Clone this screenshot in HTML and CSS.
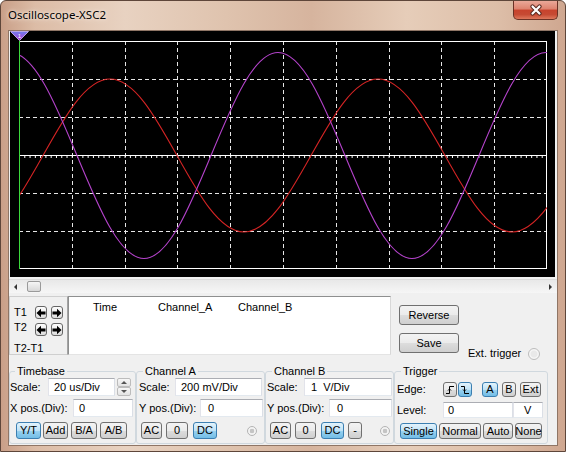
FILE: index.html
```html
<!DOCTYPE html>
<html>
<head>
<meta charset="utf-8">
<title>Oscilloscope-XSC2</title>
<link rel="stylesheet" href="styles.css">
</head>
<body>
<div class="window">
  <div class="titlebar">
    <span class="title">Oscilloscope-XSC2</span>
    <div class="close">
      <svg width="14" height="12" viewBox="0 0 14 12"><path d="M3.5 2.5 L10.5 9.5 M10.5 2.5 L3.5 9.5" stroke="#5a2a20" stroke-width="4.2" stroke-linecap="round"/><path d="M3.5 2.5 L10.5 9.5 M10.5 2.5 L3.5 9.5" stroke="#fff" stroke-width="2.2" stroke-linecap="round"/></svg>
    </div>
  </div>
  <div class="client">
    <div class="scope">
      <svg class="plot" width="545" height="246" viewBox="0 0 545 246">
        <defs>
          <clipPath id="pc"><rect x="9" y="10" width="528" height="228"/></clipPath>
          <linearGradient id="mk" x1="0" y1="0" x2="0" y2="1"><stop offset="0" stop-color="#6f7cf0"/><stop offset="1" stop-color="#b040d0"/></linearGradient>
        </defs>
        <g stroke="#e6e6e6" stroke-width="1" stroke-dasharray="4 3" fill="none">
          <path d="M62.5 10V238M115.5 10V238M167.5 10V238M220.5 10V238M273.5 10V238M326.5 10V238M379.5 10V238M431.5 10V238M484.5 10V238"/>
          <path d="M9 48.5H537M9 86.5H537M9 162.5H537M9 200.5H537"/>
        </g>
        <rect x="9.5" y="10.5" width="527" height="227" fill="none" stroke="#fff"/>
        <path d="M9 124.5H537" stroke="#fff"/>
        <path d="M9 126H537" stroke="#fff" stroke-width="2" stroke-dasharray="1 4.28"/>
        <g clip-path="url(#pc)" fill="none" stroke-width="1.1">
          <path stroke="#d42424" d="M -34 201 C -9.75 201 11.15 163.69 33 124.5 C 54.85 85.31 75.75 48 100 48 C 124.25 48 145.15 85.31 167 124.5 C 188.85 163.69 209.75 201 234 201 C 258.25 201 279.15 163.69 301 124.5 C 322.85 85.31 343.75 48 368 48 C 392.25 48 413.15 85.31 435 124.5 C 456.85 163.69 477.75 201 502 201 C 526.25 201 547.15 163.69 569 124.5"/>
          <path stroke="#b543cc" d="M -67 124.5 C -45.15 71.73 -24.25 21.5 0 21.5 C 24.25 21.5 45.15 71.73 67 124.5 C 88.85 177.27 109.75 227.5 134 227.5 C 158.25 227.5 179.15 177.27 201 124.5 C 222.85 71.73 243.75 21.5 268 21.5 C 292.25 21.5 313.15 71.73 335 124.5 C 356.85 177.27 377.75 227.5 402 227.5 C 426.25 227.5 447.15 177.27 469 124.5 C 490.85 71.73 511.75 21.5 536 21.5 C 560.25 21.5 581.15 71.73 603 124.5"/>
        </g>
        <path d="M9.5 10V238" stroke="#3cd83c"/>
        <polygon points="0.5,0.5 18.5,0.5 9.5,9.5" fill="url(#mk)" stroke="#d8c0ff" stroke-width="0.8"/>
        <text x="9.5" y="6.5" font-size="6" fill="#fff" text-anchor="middle" font-family="Liberation Sans, sans-serif">1</text>
      </svg>
    </div>
    <div class="hscroll">
      <span class="sarrow left"></span>
      <span class="thumb"></span>
      <span class="sarrow right"></span>
    </div>
    <div class="readout">
      <div class="cursors">
        <div class="crow">
          <span class="clabel">T1</span>
          <span class="abtn"><svg width="10" height="10" viewBox="0 0 10 10"><path d="M0.5 5 L5 0.8 L5 3.4 L9.5 3.4 L9.5 6.6 L5 6.6 L5 9.2 Z"/></svg></span>
          <span class="abtn"><svg width="10" height="10" viewBox="0 0 10 10"><path d="M9.5 5 L5 0.8 L5 3.4 L0.5 3.4 L0.5 6.6 L5 6.6 L5 9.2 Z"/></svg></span>
        </div>
        <div class="crow r2">
          <span class="clabel">T2</span>
          <span class="abtn"><svg width="10" height="10" viewBox="0 0 10 10"><path d="M0.5 5 L5 0.8 L5 3.4 L9.5 3.4 L9.5 6.6 L5 6.6 L5 9.2 Z"/></svg></span>
          <span class="abtn"><svg width="10" height="10" viewBox="0 0 10 10"><path d="M9.5 5 L5 0.8 L5 3.4 L0.5 3.4 L0.5 6.6 L5 6.6 L5 9.2 Z"/></svg></span>
        </div>
        <div class="cdiff">T2-T1</div>
      </div>
      <div class="table">
        <div class="thead"><span class="c-time">Time</span><span class="c-a">Channel_A</span><span class="c-b">Channel_B</span></div>
      </div>
      <div class="side">
        <span class="btn wide">Reverse</span>
        <div class="saverow">
          <span class="btn wide">Save</span>
          <span class="ext">Ext. trigger</span>
          <span class="radio"></span>
        </div>
      </div>
    </div>
    <div class="controls">
      <fieldset class="grp tb">
        <legend>Timebase</legend>
        <div class="row r1">
          <span class="lbl l1">Scale:</span>
          <span class="inp i1">20 us/Div</span>
          <span class="spin"><span class="sb up"></span><span class="sb dn"></span></span>
        </div>
        <div class="row r2">
          <span class="lbl l2">X pos.(Div):</span>
          <span class="inp i2">0</span>
        </div>
        <div class="row r3">
          <span class="btn on b1">Y/T</span>
          <span class="btn b2">Add</span>
          <span class="btn b3">B/A</span>
          <span class="btn b4">A/B</span>
        </div>
      </fieldset>
      <fieldset class="grp cha">
        <legend>Channel A</legend>
        <div class="row r1">
          <span class="lbl l1">Scale:</span>
          <span class="inp i1">200 mV/Div</span>
        </div>
        <div class="row r2">
          <span class="lbl l2">Y pos.(Div):</span>
          <span class="inp i2">0</span>
        </div>
        <div class="row r3">
          <span class="btn b1">AC</span>
          <span class="btn b2">0</span>
          <span class="btn on b3">DC</span>
          <span class="dot"></span>
        </div>
      </fieldset>
      <fieldset class="grp chb">
        <legend>Channel B</legend>
        <div class="row r1">
          <span class="lbl l1">Scale:</span>
          <span class="inp i1">1&nbsp; V/Div</span>
        </div>
        <div class="row r2">
          <span class="lbl l2">Y pos.(Div):</span>
          <span class="inp i2">0</span>
        </div>
        <div class="row r3">
          <span class="btn b1">AC</span>
          <span class="btn b2">0</span>
          <span class="btn on b3">DC</span>
          <span class="btn b4">-</span>
          <span class="dot"></span>
        </div>
      </fieldset>
      <fieldset class="grp trg">
        <legend>Trigger</legend>
        <div class="row r1">
          <span class="lbl l1">Edge:</span>
          <span class="btn e1"><svg width="10" height="10" viewBox="0 0 10 10"><path d="M1 8.5H4.5V1.5H9M3 5.5L4.5 4L6 5.5" fill="none" stroke="#000" stroke-width="1"/></svg></span>
          <span class="btn on e2"><svg width="10" height="10" viewBox="0 0 10 10"><path d="M1 1.5H4.5V8.5H9M3 4.5L4.5 6L6 4.5" fill="none" stroke="#000" stroke-width="1"/></svg></span>
          <span class="btn on e3">A</span>
          <span class="btn e4">B</span>
          <span class="btn e5">Ext</span>
        </div>
        <div class="row r2">
          <span class="lbl l2">Level:</span>
          <span class="inp i2">0</span>
          <span class="inp unit">V</span>
        </div>
        <div class="row r3">
          <span class="btn on b1">Single</span>
          <span class="btn b2">Normal</span>
          <span class="btn b3">Auto</span>
          <span class="btn b4">None</span>
        </div>
      </fieldset>
    </div>
  </div>
</div>
</body>
</html>
```

FILE: styles.css
```css
* { box-sizing: border-box; }
html, body { margin: 0; padding: 0; }
body {
  width: 566px; height: 452px; overflow: hidden; background: #fff;
  font-family: "Liberation Sans", Arial, sans-serif; font-size: 11px; line-height: 13px; color: #000;
}
.window {
  width: 566px; height: 452px; display: flex; flex-direction: column;
  border: 1px solid #5e463a; border-radius: 6px 6px 0 0;
  background: linear-gradient(90deg, #c99f88 0%, #dcbca6 6%, #e8d2c1 22%, #dfc3ae 40%, #d6b49e 55%, #e6cdb9 72%, #ddbea8 88%, #cfa790 100%);
}
.titlebar { height: 29px; flex: none; display: flex; align-items: flex-start; }
.title {
  margin: 6px 0 0 7px; font-family: "Noto Sans", "Open Sans", sans-serif; font-size: 11.5px; line-height: 16px;
  text-shadow: 0 0 6px #f5e9e0, 0 0 3px #f5e9e0;
}
.close {
  margin: 0 7px 0 auto; width: 45px; height: 19px; display: flex; align-items: center; justify-content: center;
  border: 1px solid #6a3226; border-top: none; border-radius: 0 0 5px 5px;
  background: linear-gradient(#eaa898 0%, #dd826e 45%, #c8432d 50%, #c64a33 75%, #de785c 100%);
}
.client {
  flex: 1; margin: 0 7px 5px 7px; border: 1px solid #8f7565; background: #f0f0f0;
  display: flex; flex-direction: column;
}
.scope { margin-left: 1px; width: 545px; height: 246px; background: #000; flex: none; }
.plot { display: block; }
.hscroll {
  margin-top: 2px; height: 14px; flex: none; display: flex; align-items: center;
  background: linear-gradient(#e8e8e8, #f6f6f6); border-top: 1px solid #dcdcdc;
}
.sarrow { width: 0; height: 0; border-top: 3px solid transparent; border-bottom: 3px solid transparent; }
.sarrow.left { margin-left: 5px; border-right: 3px solid #333; }
.sarrow.right { margin-left: auto; margin-right: 5px; border-left: 3px solid #333; }
.thumb {
  margin-left: 10px; width: 14px; height: 11px; border: 1px solid #9a9a9a; border-radius: 2px;
  background: linear-gradient(#f6f6f6, #d8d8d8);
}
.readout { margin-top: 3px; height: 59px; flex: none; display: flex; }
.cursors {
  width: 59px; height: 59px; border: 1px solid #cfcfcf; border-right: 1px solid #a4a4a4;
  padding: 9px 0 0 4px;
}
.crow { display: flex; align-items: center; height: 13px; }
.crow.r2 { margin-top: 4px; }
.crow.r2 .clabel { margin-top: -5px; }
.clabel { width: 21px; flex: none; }
.abtn {
  width: 12px; height: 13px; margin-right: 4px; flex: none; display: flex; align-items: center; justify-content: center;
  border: 1px solid #666; border-radius: 3px; background: linear-gradient(#fdfdfd, #dcdcdc);
}
.abtn svg { display: block; }
.cdiff { margin-top: 6px; }
.table {
  width: 323px; height: 59px; background: #fff; border: 1px solid #8e8f8f; border-right-color: #d8d8d8; border-bottom-color: #e4e4e4;
  padding-top: 4px;
}
.thead { display: flex; padding-left: 24px; }
.c-time { width: 65px; }
.c-a { width: 80px; }
.side { margin-left: 8px; padding-top: 9px; display: flex; flex-direction: column; }
.saverow { display: flex; align-items: flex-start; margin-top: 8px; }
.ext { margin: 14px 0 0 9px; white-space: nowrap; }
.radio {
  margin: 15px 0 0 7px; width: 12px; height: 12px; border-radius: 50%; border: 1px solid #bdbdbd;
  background: radial-gradient(circle, #e9e9e9 0 3px, #f6f6f6 4px);
}
.btn {
  display: flex; align-items: center; justify-content: center; flex: none; height: 100%;
  border: 1px solid #707070; border-radius: 3px;
  background: linear-gradient(#f3f3f3 0%, #ebebeb 50%, #dddddd 51%, #cfcfcf 100%);
  white-space: nowrap;
}
.btn.on { border-color: #3c7fb1; background: linear-gradient(#e3f3fc 0%, #bfe2f6 50%, #9bd2f0 51%, #72bde6 100%); }
.btn.wide { width: 60px; height: 20px; }
.controls { margin-top: 9px; height: 80px; flex: none; display: flex; }
fieldset.grp {
  margin: 0; padding: 0; min-width: 0; height: 80px; flex: none;
  border: 1px solid #d0d8de; border-radius: 3px;
}
.grp legend { padding: 0 2px; margin-left: 6px; line-height: 14px; }
.row { display: flex; align-items: center; height: 18px; }
.row.r2 { margin-top: 3px; }
.row.r3 { margin-top: 5px; height: 17px; }
.lbl { flex: none; white-space: nowrap; }
.inp {
  flex: none; height: 18px; background: #fff; display: flex; align-items: center; padding-left: 5px;
  border: 1px solid; border-color: #abadb3 #dbdfe6 #e3e9ef #e2e3ea; white-space: nowrap;
}
.spin { margin-left: 2px; width: 14px; height: 18px; display: flex; flex-direction: column; flex: none; }
.sb {
  flex: 1; display: flex; align-items: center; justify-content: center;
  border: 1px solid #bcbcbc; border-radius: 2px; background: linear-gradient(#f7f7f7, #e3e3e3);
}
.sb::after { content: ""; width: 0; height: 0; border-left: 3px solid transparent; border-right: 3px solid transparent; }
.sb.up::after { border-bottom: 3px solid #555; }
.sb.dn::after { border-top: 3px solid #555; }
.dot {
  flex: none; width: 10px; height: 10px; border-radius: 50%; border: 1px solid #b4b4b4;
  background: radial-gradient(circle, #c4c4c4 0 2px, #f3f3f3 2.6px);
}

/* Timebase */
.tb { width: 127px; }
.tb legend { margin-left: 5px; }
.tb .l1 { width: 38px; }
.tb .i1 { width: 67px; }
.tb .l2 { width: 63px; }
.tb .i2 { width: 60px; }
.tb .r3 { padding-left: 6px; }
.tb .b1 { width: 25px; }
.tb .b2 { width: 25px; margin-left: 2px; }
.tb .b3 { width: 26px; margin-left: 3px; }
.tb .b4 { width: 27px; margin-left: 3px; }

/* Channel A */
.cha { width: 129px; margin-left: 3px; }
.cha .row { padding-left: 2px; }
.cha .l1 { width: 36px; }
.cha .i1 { width: 87px; }
.cha .l2 { width: 61px; }
.cha .i2 { width: 63px; padding-left: 7px; }
.cha .r3 { padding-left: 4px; }
.cha .b1 { width: 21px; }
.cha .b2 { width: 22px; margin-left: 4px; }
.cha .b3 { width: 24px; margin-left: 5px; }
.cha .dot { margin-left: 30px; }

/* Channel B */
.chb { width: 129px; margin-left: 1px; }
.chb .row { padding-left: 1px; }
.chb .l1 { width: 37px; }
.chb .i1 { width: 88px; padding-left: 6px; }
.chb .l2 { width: 62px; }
.chb .i2 { width: 63px; padding-left: 7px; }
.chb .r3 { padding-left: 4px; }
.chb .b1 { width: 21px; }
.chb .b2 { width: 21px; margin-left: 4px; }
.chb .b3 { width: 23px; margin-left: 5px; }
.chb .b4 { width: 14px; margin-left: 4px; }
.chb .dot { margin-left: 18px; }

/* Trigger */
.trg { width: 154px; margin-left: 1px; }
.trg .row { padding-left: 2px; }
.trg .r1 { margin-top: 4px; height: 15px; }
.trg .r2 { margin-top: 5px; height: 16px; }
.trg .r3 { margin-top: 5px; height: 16px; padding-left: 5px; }
.trg .l1, .trg .l2 { width: 46px; }
.trg .e1 { width: 14px; }
.trg .e2 { width: 14px; margin-left: 1px; }
.trg .e3 { width: 16px; margin-left: 10px; }
.trg .e4 { width: 14px; margin-left: 4px; }
.trg .e5 { width: 21px; margin-left: 4px; }
.trg .btn svg { display: block; }
.trg .i2 { width: 70px; height: 16px; padding-left: 4px; align-items: flex-end; }
.trg .unit { width: 30px; height: 16px; padding-left: 10px; align-items: flex-end; }
.trg .b1 { width: 37px; }
.trg .b2 { width: 42px; margin-left: 2px; }
.trg .b3 { width: 30px; margin-left: 2px; }
.trg .b4 { width: 27px; margin-left: 2px; }
```
